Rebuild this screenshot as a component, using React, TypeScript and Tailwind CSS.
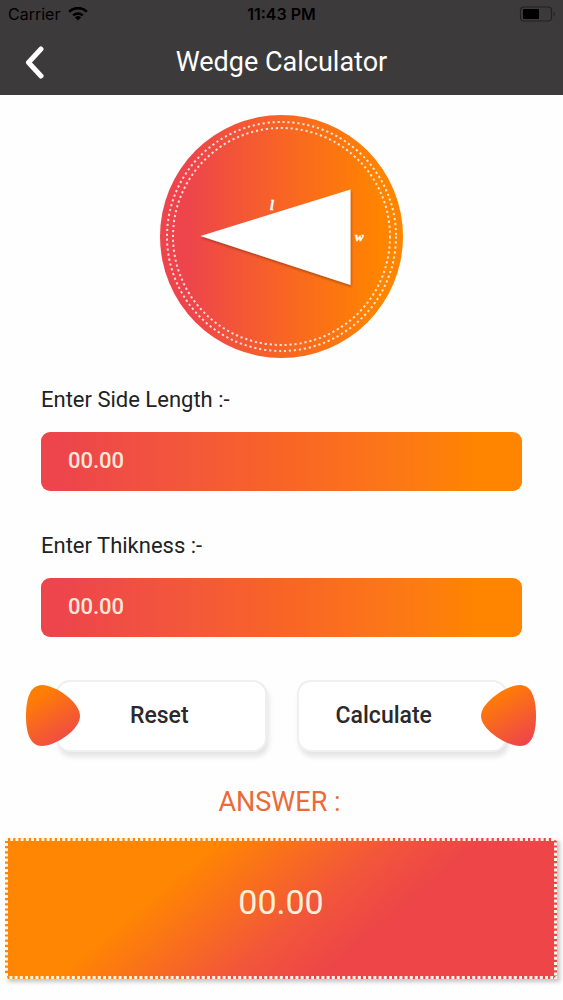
import { useState } from "react";

function StatusBar() {
  return (
    <div className="grid h-7 grid-cols-3 items-center pr-2 pl-2 font-['Inter','Liberation_Sans',sans-serif] text-base text-black">
      <div className="flex items-center gap-2">
        <span>Carrier</span>
        <svg width="20" height="14" viewBox="0 0 20 14" aria-hidden="true">
          <path d="M10 13.6 6.9 10.5a4.5 4.5 0 0 1 6.2 0z" />
          <path d="M5.2 8.4a7 7 0 0 1 9.6 0M1.2 4.7a12.6 12.6 0 0 1 17.6 0" fill="none" stroke="#000" strokeWidth="2.6" />
        </svg>
      </div>
      <span className="text-center font-semibold">11:43 PM</span>
      <svg className="justify-self-end" width="36" height="16" viewBox="0 0 36 16" aria-hidden="true">
        <rect x="1.500" y="1" width="31" height="14" rx="3.5" fill="none" stroke="#222122" strokeWidth="1.2" />
        <rect x="4" y="3" width="16" height="10" rx="1" />
        <path d="M34.500 5.5c1.6.8 1.6 4.2 0 5z" fill="#222122" />
      </svg>
    </div>
  );
}

function WedgeFigure() {
  return (
    <svg className="mx-auto block" width="243" height="243" viewBox="0 0 243 243" role="img" aria-label="Wedge with side l and thickness w">
      <defs>
        <linearGradient id="disc" x1="0" x2="1" y1="0" y2="0">
          <stop offset="0.12" stopColor="#ed454b" />
          <stop offset="0.5" stopColor="#f86425" />
          <stop offset="0.9" stopColor="#ff8400" />
        </linearGradient>
        <filter id="shade" x="-10%" y="-10%" width="120%" height="120%">
          <feDropShadow dx="0.6" dy="1.600" stdDeviation="1.2" floodColor="#5a2000" floodOpacity="0.5" />
        </filter>
      </defs>
      <circle cx="121.500" cy="121.500" r="121.500" fill="url(#disc)" />
      <g fill="none" stroke="#fff" strokeOpacity="0.8" strokeWidth="2" strokeDasharray="2.200 2.800">
        <circle cx="121.500" cy="121.500" r="114.500" />
        <circle cx="121.500" cy="121.500" r="108.500" />
      </g>
      <path d="M40.500 121 190.500 74.500V170z" fill="#fff" filter="url(#shade)" />
      <g className="font-['Liberation_Serif',serif] font-bold italic" fill="#fff" stroke="#fff" strokeWidth="0.4">
        <text x="110" y="95" fontSize="14">l</text>
        <text x="195" y="126" fontSize="13">w</text>
      </g>
    </svg>
  );
}

type FieldProps = { id: string; label: string; value: string; onChange: (v: string) => void };

function Field({ id, label, value, onChange }: FieldProps) {
  return (
    <div className="flex flex-col gap-[18px]">
      <label htmlFor={id} className="text-[22px] leading-7 text-[#222]">{label}</label>
      <input
        id={id}
        inputMode="decimal"
        placeholder="00.00"
        value={value}
        onChange={(e) => onChange(e.target.value)}
        className="h-[59px] w-full rounded-[9px] bg-linear-to-r from-[#ed454b] from-5% via-[#f86425] via-50% to-[#ff8400] to-90% px-[27px] pb-[2px] text-[22px] font-medium text-[#ffe8d8] outline-none placeholder:text-[#ffe8d8]"
      />
    </div>
  );
}

function Blob({ flip = false }: { flip?: boolean }) {
  const id = flip ? "blob-right" : "blob-left";
  const shape = flip
    ? "M0 31C0 17 26 0 39 0 51 0 55 14 55 31S51 61 39 61C26 61 0 45 0 31Z"
    : "M54 31C54 17 29 0 16 0 4 0 0 14 0 31S4 61 16 61C29 61 54 45 54 31Z";
  return (
    <svg className={flip ? "absolute top-[3px] -right-[31px]" : "absolute top-[3px] -left-[32px]"} width="55" height="61" viewBox="0 0 55 61" aria-hidden="true">
      <defs>
        <linearGradient id={id} x1="0.2" y1="0" x2="0.75" y2="1">
          <stop offset="0.15" stopColor="#ff7d05" />
          <stop offset="1" stopColor="#ee454b" />
        </linearGradient>
      </defs>
      <path d={shape} fill={`url(#${id})`} />
    </svg>
  );
}

const buttonClass =
  "relative h-[72px] rounded-[14px] border-2 border-[#f0eef0] bg-white text-[23px] font-medium text-[#2b292b] shadow-[2px_5px_5px_rgba(0,0,0,0.1)]";

export default function App() {
  const [side, setSide] = useState("");
  const [thickness, setThickness] = useState("");
  const [answer, setAnswer] = useState("00.00");

  const reset = () => {
    setSide("");
    setThickness("");
    setAnswer("00.00");
  };

  const calculate = () => {
    const s = parseFloat(side);
    const t = parseFloat(thickness);
    if (s > 0 && t > 0) {
      setAnswer(((2 * Math.asin(Math.min(1, t / (2 * s))) * 180) / Math.PI).toFixed(2));
    }
  };

  return (
    <div className="min-h-screen bg-[#fefefe] font-['Roboto',sans-serif]">
      <header className="bg-[#3d3a3c]">
        <StatusBar />
        <div className="grid h-[67px] grid-cols-[64px_1fr_64px] items-center">
          <button type="button" aria-label="Back" className="flex h-full items-center pl-6">
            <svg width="20" height="34" viewBox="0 0 20 34" fill="none" stroke="#fff" strokeWidth="5" strokeLinecap="round" strokeLinejoin="round" aria-hidden="true">
              <path d="M17 4 4.500 17.500 17 31" />
            </svg>
          </button>
          <h1 className="text-center text-[27px] leading-8 text-white">Wedge Calculator</h1>
        </div>
      </header>

      <main className="pt-5">
        <WedgeFigure />
        <div className="mt-7 flex flex-col gap-[41px] px-[41px]">
          <Field id="side" label="Enter Side Length :-" value={side} onChange={setSide} />
          <Field id="thickness" label="Enter Thikness :-" value={thickness} onChange={setThickness} />
        </div>

        <div className="mt-[43px] grid grid-cols-2 gap-[30px] px-14">
          <button type="button" onClick={reset} className={`${buttonClass} pr-1`}>
            Reset
            <Blob />
          </button>
          <button type="button" onClick={calculate} className={`${buttonClass} pr-9`}>
            Calculate
            <Blob flip />
          </button>
        </div>

        <h2 className="mt-8 pr-1 text-center text-[27px] leading-9 text-[#ea6a38]">ANSWER :</h2>
        <div className="relative mt-[18px] mr-[6px] mb-5 ml-[5px] flex h-[141px] items-center justify-center bg-[linear-gradient(140deg,#ff8602_30%,#f2563a_54%,#ed4548_67%)] pb-3 shadow-[3px_3px_4px_rgba(0,0,0,0.22)]">
          <svg className="absolute inset-0 h-full w-full" aria-hidden="true">
            <rect width="100%" height="100%" fill="none" stroke="#fff6e8" strokeWidth="6" strokeDasharray="3 2.200" />
          </svg>
          <output className="text-[34px] text-[#fff0dc]">{answer}</output>
        </div>
      </main>
    </div>
  );
}
